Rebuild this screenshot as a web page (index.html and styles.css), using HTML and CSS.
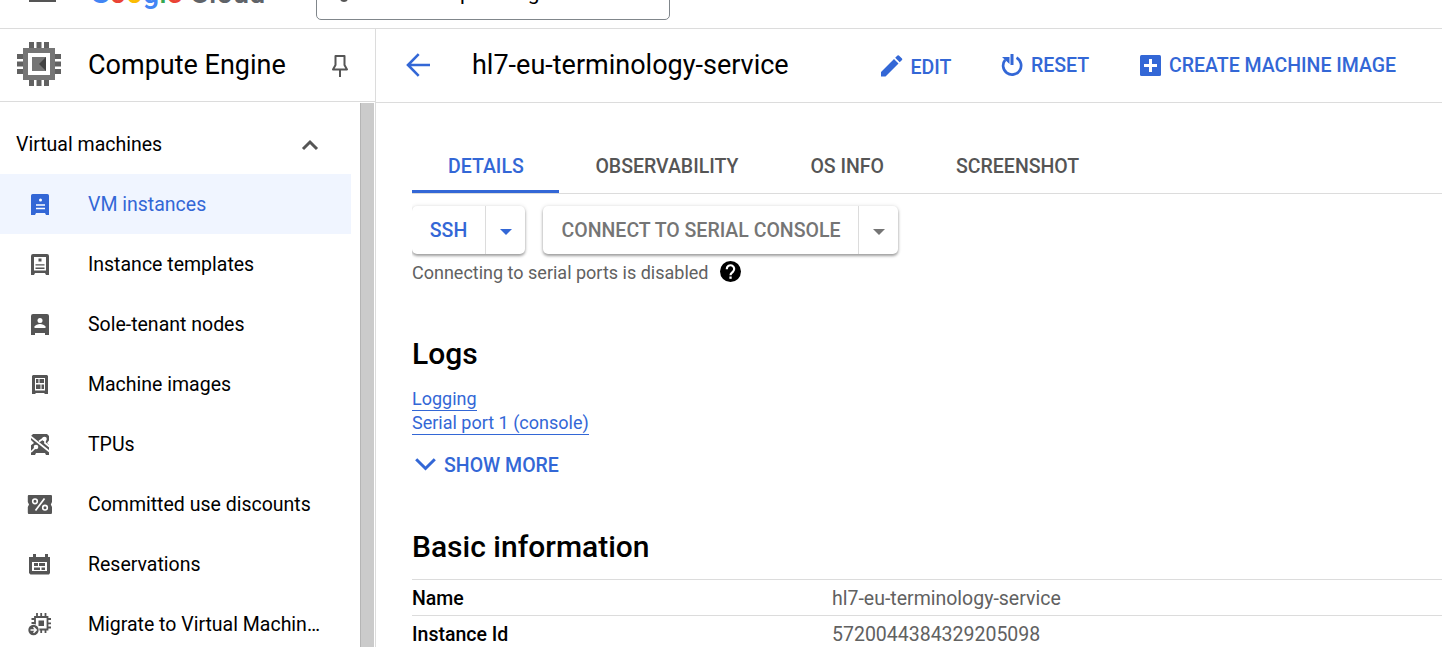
FILE: index.html
```html
<!DOCTYPE html>
<html lang="en">
<head>
<meta charset="utf-8">
<title>Compute Engine</title>
<link rel="stylesheet" href="styles.css">
</head>
<body>
<header class="topbar">
  <span class="menu"></span>
  <div class="brand"><span class="b">G</span><span class="r">o</span><span class="y">o</span><span class="b">g</span><span class="g">l</span><span class="r">e</span><span class="cloud">Cloud</span></div>
  <div class="picker"><span class="picker-dot"></span><span class="picker-p">p</span><span>g</span></div>
</header>
<div class="layout">
  <aside class="sidebar">
    <div class="product">
      <svg class="chip" width="44" height="44" viewBox="0 0 44 44"><path fill="#616161" d="M12 0h5v6h-5zM19.500 0h5v6h-5zM27 0h5v6h-5zM12 38h5v6h-5zM19.500 38h5v6h-5zM27 38h5v6h-5zM0 12h6v5H0zM0 19.500h6v5H0zM0 27h6v5H0zM38 12h6v5h-6zM38 19.500h6v5h-6zM38 27h6v5h-6z"/><path fill="#757575" fill-rule="evenodd" d="M6 6h32v32H6zM11 11v22h22V11z"/><path fill="#757575" d="M15 15h14v14H15z"/><path fill="#424242" d="M29 15v14l-7-7z"/></svg>
      <h1 class="product-name">Compute Engine</h1>
      <svg class="pin" width="18" height="24" viewBox="0 0 18 24"><path fill="none" stroke="#555" stroke-width="2" stroke-linejoin="round" d="M4.500 2h9v9l2.500 4.500H2L4.500 11zM9 15.500V23"/></svg>
    </div>
    <div class="sidebar-body">
      <nav class="nav">
        <div class="section"><span>Virtual machines</span>
          <svg width="16" height="10" viewBox="0 0 16 10"><path fill="none" stroke="#555" stroke-width="3" d="M1 9l7-7 7 7"/></svg></div>
        <a class="item active"><svg width="24" height="24" viewBox="0 0 24 24"><path fill="#3367d6" d="M4.500 1h13A2 2 0 0 1 20 3v19h-3l-1-2H7l-1 2H2V3a2 2 0 0 1 2.500-2z"/><circle cx="11.500" cy="7" r="1.500" fill="#fff"/><path stroke="#fff" stroke-width="1.500" d="M7 12h9M7 15.500h9"/></svg><span>VM instances</span></a>
        <a class="item"><svg width="24" height="24" viewBox="0 0 24 24"><path fill="#555" fill-rule="evenodd" d="M4 1h14a2 2 0 0 1 2 2v19h-3l-1-2H6l-1 2H2V3a2 2 0 0 1 2-2zM5 4v13.500h12V4z"/><path fill="#555" d="M9.500 5.500h3v3h-3zM6.500 11.200h9v1.400h-9zM6.500 14.500h9v1.500h-9z"/></svg><span>Instance templates</span></a>
        <a class="item"><svg width="24" height="24" viewBox="0 0 24 24"><path fill="#555" d="M4 1h14a2 2 0 0 1 2 2v19h-4v-2H6v2H2V3a2 2 0 0 1 2-2z"/><circle cx="11" cy="7.500" r="2.500" fill="#fff"/><path fill="#fff" d="M5.500 15v-1.500c2-3.500 9-3.500 11 0V15z"/></svg><span>Sole-tenant nodes</span></a>
        <a class="item"><svg width="24" height="24" viewBox="0 0 24 24"><path fill="#555" fill-rule="evenodd" d="M4 2h14l1 1v18h-3l-1-1H7l-1 1H3V3zM6 5v12.500h10V5z"/><path fill="#555" d="M7 6h2.500v4H7zM10.500 6H15v4h-4.500zM7 11.500h4.500v4.500H7zM12.500 11.500H15v4.500h-2.500z"/></svg><span>Machine images</span></a>
        <a class="item"><svg width="24" height="24" viewBox="0 0 24 24"><path fill="#555" d="M4 1h14l2 2v19h-3l-1-2H7l-1 2H2V3z"/><path fill="none" stroke="#fff" stroke-width="1.700" d="M1 3l20 16M10 8.500L15 5M2 19l6-6M16 5v5l5 4"/><g fill="#fff"><circle cx="15.500" cy="6" r="2.300"/><circle cx="7" cy="14" r="2.300"/><path d="M1 6l4 4-4 3zM21 6v7l-3-3z"/></g></svg><span>TPUs</span></a>
        <a class="item"><svg width="24" height="24" viewBox="0 0 24 24"><path fill="#555" d="M-.3 2h22.300q1 0 1 1.200V9l-1.200 2.500L23 14v5.500q0 1.500-1 1.500H-.2Q-1.200 21-1.200 19.500V14L0 11.500-1.200 9V3.200Q-1.200 2-.3 2z"/><path fill="none" stroke="#fff" stroke-width="1.700" d="M15.500 5.500L6.500 17.500"/><circle cx="6" cy="8.300" r="2.300" fill="none" stroke="#fff" stroke-width="1.600"/><circle cx="16" cy="14.700" r="2.300" fill="none" stroke="#fff" stroke-width="1.600"/></svg><span>Committed use discounts</span></a>
        <a class="item"><svg width="24" height="24" viewBox="0 0 24 24"><path fill="#555" fill-rule="evenodd" d="M4 1h3v3h9V1h3v3h2v16l-1 1.500H1.500L0 20V4h4zM3 9v9h15V9z"/><path fill="#555" d="M5 10h4v3H5zM10 10h6v3h-6zM5 14.500h6v2.500H5zM12.500 14.500H16v2.500h-3.500z"/></svg><span>Reservations</span></a>
        <a class="item"><svg width="24" height="24" viewBox="0 0 24 24"><path fill="none" stroke="#555" stroke-width="1.800" d="M6 4h12.500v12.500H6zM8 0v4M12.200 0v4M16.500 0v4M8 16v4M12.200 16v4M16.500 16v4M2.500 6H6M2.500 10H6M18 6h4M18 10.300h4M18 14.500h4"/><path fill="#555" d="M9.500 7.500h5.500v5.500H9.500z"/><circle cx="4.500" cy="17" r="6" fill="#fff"/><circle cx="4.500" cy="17" r="5.200" fill="#555"/><path fill="none" stroke="#fff" stroke-width="1.500" d="M1.500 17h5.500M4.500 14.300L7.200 17l-2.700 2.700"/></svg><span>Migrate to Virtual Machin…</span></a>
      </nav>
      <div class="scrollbar"></div>
    </div>
  </aside>
  <main class="main">
    <div class="toolbar">
      <svg class="back" width="24" height="24" viewBox="0 0 24 24"><path fill="none" stroke="#3367d6" stroke-width="2.600" d="M24 12H2M12.700 1.200L2 12l10.700 10.800"/></svg>
      <h2 class="vm-name">hl7-eu-terminology-service</h2>
      <a class="action edit"><svg width="22" height="22" viewBox="0 0 22 22"><path fill="#3367d6" d="M0 17L13 4l4.500 4.500-13 13H0zM14.200 2.800L16.500.500q.7-.7 1.400 0l3.100 3.100q.7.700 0 1.400l-2.300 2.300z"/></svg><span>EDIT</span></a>
      <a class="action reset"><svg width="22" height="24" viewBox="0 0 22 24"><path fill="none" stroke="#3367d6" stroke-width="2.700" d="M15.500 4.700A9 9 0 1 1 4.200 6.800"/><path fill="#3367d6" d="M9.500 1h3v11h-3zM1 4h7.500v7z"/></svg><span>RESET</span></a>
      <a class="action create"><svg width="21" height="21" viewBox="0 0 21 21"><rect width="21" height="21" rx="1.500" fill="#3367d6"/><path stroke="#fff" stroke-width="3" d="M4 10.500h13M10.500 4v13"/></svg><span>CREATE MACHINE IMAGE</span></a>
    </div>
    <div class="content">
      <div class="tabs"><a class="tab selected">DETAILS</a><a class="tab">OBSERVABILITY</a><a class="tab">OS INFO</a><a class="tab">SCREENSHOT</a></div>
      <div class="buttons">
        <div class="split ssh"><span class="label">SSH</span><span class="arrow"><i></i></span></div>
        <div class="split serial"><span class="label">CONNECT TO SERIAL CONSOLE</span><span class="arrow"><i></i></span></div>
      </div>
      <div class="hint"><span>Connecting to serial ports is disabled</span>
        <svg width="21" height="21" viewBox="0 0 21 21"><circle cx="10.500" cy="10.500" r="10.500"/><path fill="none" stroke="#fff" stroke-width="2.200" d="M6.800 8.200a3.700 3.700 0 1 1 6.200 2.500c-1.400 1.200-2.500 1.700-2.500 3.500"/><path fill="#fff" d="M9.400 15.500h2.300v2.300H9.400z"/></svg></div>
      <h3 class="heading">Logs</h3>
      <div class="links"><a class="link logging">Logging</a><a class="link">Serial port 1 (console)</a></div>
      <a class="more"><svg width="21" height="13" viewBox="0 0 21 13"><path fill="none" stroke="#3367d6" stroke-width="3" d="M1.200 1.200l9.300 9.300 9.300-9.300"/></svg><span>SHOW MORE</span></a>
      <h3 class="heading basic">Basic information</h3>
      <dl class="info">
        <div class="row"><dt class="key name">Name</dt><dd class="value">hl7-eu-terminology-service</dd></div>
        <div class="row"><dt class="key">Instance Id</dt><dd class="value id">5720044384329205098</dd></div>
      </dl>
    </div>
  </main>
</div>
</body>
</html>
```
FILE: styles.css
```css
* { box-sizing: border-box; }
body { margin: 0; height: 647px; overflow: hidden; background: #fff; color: #000; font-family: Roboto, "Liberation Sans", sans-serif; }
h1, h2, h3, dl, dd { margin: 0; font-weight: 400; }
svg { display: block; flex: none; overflow: visible; }

.topbar { height: 29px; border-bottom: 1px solid #dcdcdc; display: flex; align-items: flex-start; overflow: hidden; }
.menu { width: 27px; height: 2px; margin-left: 29px; background: #555; }
.brand { width: 225px; margin: -25px 0 0 34px; font: 500 29px/36px Roboto, sans-serif; white-space: nowrap; }
.b { color: #4285f4; } .r { color: #ea4335; } .y { color: #fbbc04; } .g { color: #34a853; }
.cloud { color: #5f6368; margin-left: 8px; }
.picker { width: 354px; height: 50px; margin: -30px 0 0 1px; border: 1px solid #80868b; border-radius: 5px; display: flex; align-items: flex-start; font-size: 21px; line-height: 24px; padding-top: 10px; }
.picker-dot { width: 8px; height: 8px; border-radius: 50%; background: #555; margin: 13px 0 0 23px; }
.picker-p { margin: 0 56px 0 112px; }

.layout { display: flex; height: 618px; }
.sidebar { width: 376px; flex: none; border-right: 1px solid #dcdcdc; }
.product { height: 73px; border-bottom: 1px solid #dcdcdc; display: flex; align-items: center; padding: 0 26.500px 0 17px; }
.chip { margin-top: -2px; }
.product-name { margin: 0 auto 0 27px; font-size: 27px; line-height: 36px; white-space: nowrap; }
.pin { margin-top: 2px; }
.sidebar-body { height: 545px; display: flex; justify-content: space-between; overflow: hidden; }
.nav { width: 351px; padding-top: 12px; font-size: 19.500px; }
.section, .item { height: 60px; display: flex; align-items: center; white-space: nowrap; }
.section { padding: 0 33.500px 0 16px; justify-content: space-between; }
.section svg { margin-top: 1px; }
.item { padding-left: 29.400px; gap: 34.600px; }
.item svg { margin-top: 1px; }
.item.active { background: #f0f5ff; color: #3367d6; }
.scrollbar { width: 14px; margin: 1px 1px 0 0; background: #cbcbcb; border-left: 1px solid #b5b5b5; }

.main { flex: 1; min-width: 0; }
.toolbar { height: 74px; border-bottom: 1px solid #dcdcdc; display: flex; align-items: center; padding-left: 30px; white-space: nowrap; }
.back { margin-top: -1px; }
.vm-name { width: 409px; margin: -1px 0 0 42px; font-size: 27px; line-height: 36px; }
.action { display: flex; align-items: center; gap: 8px; color: #3367d6; font-size: 19.500px; font-weight: 500; }
.edit { width: 120px; gap: 7.500px; }
.edit span { padding-top: 3px; }
.reset { width: 139px; }
.reset svg { margin-top: -2px; }
.content { padding-left: 36px; }
.tabs { height: 91px; border-bottom: 1px solid #dcdcdc; display: flex; align-items: flex-end; }
.tab { height: 54px; padding: 2px 36px 0; line-height: 51px; font-size: 19.500px; font-weight: 500; color: #555; white-space: nowrap; }
.tab.selected { width: 147.400px; color: #3367d6; box-shadow: inset 0 -3px #3367d6; }
.buttons { height: 67px; padding-top: 12px; display: flex; gap: 18px; overflow: hidden; }
.split { height: 48px; display: flex; border-radius: 5px; box-shadow: 0 2px 3px rgba(0,0,0,.35), 0 0 4px rgba(0,0,0,.12); font-size: 19.500px; font-weight: 500; line-height: 48px; text-align: center; white-space: nowrap; }
.ssh { width: 113px; color: #3367d6; }
.serial { width: 355px; color: #757575; }
.label { flex: 1; padding-top: 1px; }
.serial .label { padding-left: 1px; }
.arrow { width: 40px; border-left: 1px solid #dcdcdc; display: flex; align-items: center; justify-content: center; }
.arrow i { border: 6.500px solid transparent; border-top-color: currentColor; border-bottom: 0; margin-top: 3px; }
.hint { height: 22px; display: flex; align-items: center; gap: 12px; font-size: 18px; color: #616161; }
.hint svg { margin-top: -1px; }
.heading { height: 36px; margin-top: 53px; font-size: 30px; line-height: 36px; font-weight: 500; }
.links { margin-top: 16px; display: flex; flex-direction: column; align-items: flex-start; gap: 1px; }
.link { height: 23px; font-size: 18px; line-height: 21px; color: #3367d6; border-bottom: 1px solid #3367d6; }
.more { margin-top: 18px; padding-left: 3px; height: 24px; display: flex; align-items: center; gap: 8px; color: #3367d6; font-size: 19.500px; font-weight: 500; }
.more svg { margin-top: -1px; }
.more span { padding-top: 1px; }
.heading.basic { margin-top: 52px; }
.info { margin-top: 14px; }
.row { height: 36px; border-top: 1px solid #dcdcdc; display: flex; align-items: center; padding-top: 2px; }
.key { width: 420px; font-size: 19.500px; font-weight: 500; }
.value { font-size: 19.500px; color: #616161; }
```
